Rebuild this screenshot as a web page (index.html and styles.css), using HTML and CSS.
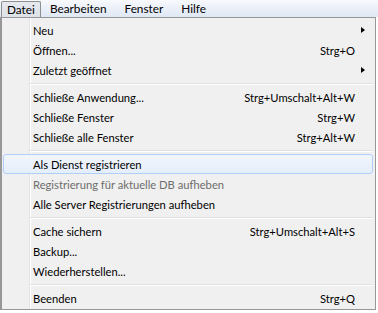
FILE: index.html
```html
<!DOCTYPE html>
<html lang="de">
<head>
<meta charset="utf-8">
<title>Menü</title>
<link rel="stylesheet" href="styles.css">
</head>
<body>
<div class="menubar">
  <span class="mb-item active">Datei</span>
  <span class="mb-item">Bearbeiten</span>
  <span class="mb-item">Fenster</span>
  <span class="mb-item">Hilfe</span>
</div>
<div class="menu">
  <div class="item"><span class="label">Neu</span><span class="key"></span><span class="sub"><i class="arrow"></i></span></div>
  <div class="item"><span class="label">Öffnen...</span><span class="key">Strg+O</span><span class="sub"></span></div>
  <div class="item"><span class="label">Zuletzt geöffnet</span><span class="key"></span><span class="sub"><i class="arrow"></i></span></div>
  <div class="sep"></div>
  <div class="item"><span class="label">Schließe Anwendung...</span><span class="key">Strg+Umschalt+Alt+W</span><span class="sub"></span></div>
  <div class="item"><span class="label">Schließe Fenster</span><span class="key">Strg+W</span><span class="sub"></span></div>
  <div class="item"><span class="label">Schließe alle Fenster</span><span class="key">Strg+Alt+W</span><span class="sub"></span></div>
  <div class="sep"></div>
  <div class="item hover"><span class="label">Als Dienst registrieren</span><span class="key"></span><span class="sub"></span></div>
  <div class="item disabled"><span class="label">Registrierung für aktuelle DB aufheben</span><span class="key"></span><span class="sub"></span></div>
  <div class="item"><span class="label">Alle Server Registrierungen aufheben</span><span class="key"></span><span class="sub"></span></div>
  <div class="sep"></div>
  <div class="item"><span class="label">Cache sichern</span><span class="key">Strg+Umschalt+Alt+S</span><span class="sub"></span></div>
  <div class="item"><span class="label">Backup...</span><span class="key"></span><span class="sub"></span></div>
  <div class="item"><span class="label">Wiederherstellen...</span><span class="key"></span><span class="sub"></span></div>
  <div class="sep"></div>
  <div class="item"><span class="label">Beenden</span><span class="key">Strg+Q</span><span class="sub"></span></div>
</div>
</body>
</html>
```
FILE: styles.css
```css
html, body {
  margin: 0;
  padding: 0;
  background: #ffffff;
}
body {
  font-family: "Lato", "Noto Sans", sans-serif;
  font-size: 11.2px;
  color: #000;
  width: 378px;
  height: 313px;
  overflow: hidden;
}
.menubar {
  height: 17px;
  display: flex;
  align-items: stretch;
  padding-left: 1px;
  font-size: 11.8px;
  background: linear-gradient(to bottom, #f7f9fc 0%, #e9eff8 55%, #dfe8f5 100%);
}
.mb-item {
  display: flex;
  align-items: center;
  padding: 0 8px 0 8px;
  line-height: 16px;
  border: 1px solid transparent;
  border-bottom: none;
}
.mb-item.active {
  padding: 0 5px 0 5px;
  border-color: #8e8f8f;
  border-radius: 2px 2px 0 0;
  background: linear-gradient(to bottom, #e6e9ee, #dde2e8);
  margin-top: 1px;
}
.menu {
  box-sizing: border-box;
  width: 376px;
  border: 1px solid #979797;
  border-left-width: 2px;
  padding: 2px 2px 1px 1px;
  background-color: #f0f0f0;
  background-image:
    linear-gradient(to right, transparent 27px, #e2e3e3 27px, #e2e3e3 28px, #ffffff 28px, #ffffff 29px, transparent 29px);
}
.item {
  display: grid;
  grid-template-columns: 1fr auto 17px;
  align-items: center;
  height: 20px;
  padding-left: 29px;
  border: 1px solid transparent;
  border-radius: 3px;
  box-sizing: border-box;
  white-space: nowrap;
}
.item.hover {
  border-color: #aecff7;
  background: linear-gradient(to bottom, #f2f6fc, #e5eefb);
}
.item.disabled {
  color: #6d6d6d;
}
.key {
  text-align: right;
}
.sub {
  position: relative;
  height: 100%;
}
.arrow {
  position: absolute;
  left: 6px;
  top: 6px;
  width: 0;
  height: 0;
  border-top: 3.5px solid transparent;
  border-bottom: 3.5px solid transparent;
  border-left: 4px solid #000;
}
.sep {
  height: 7px;
  margin-left: 27px;
  background: linear-gradient(to bottom, transparent 3px, #e0e0e0 3px, #e0e0e0 4px, #ffffff 4px, #ffffff 5px, transparent 5px);
}
```
